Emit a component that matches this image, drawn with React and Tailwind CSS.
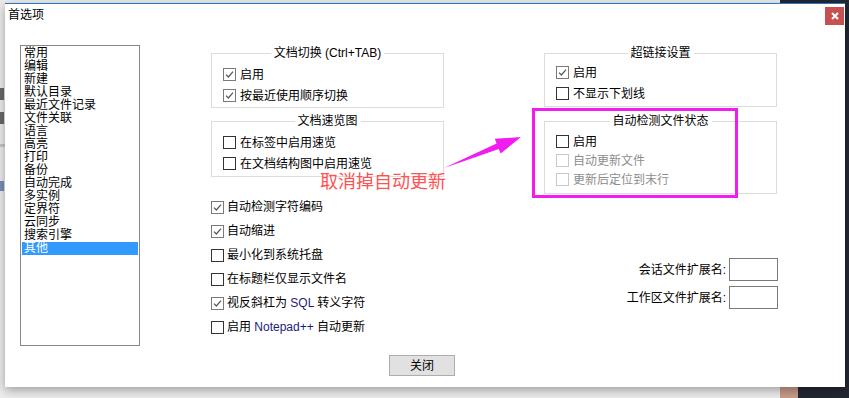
import React from "react";

const menuItems = [
    "常用", "编辑", "新建", "默认目录", "最近文件记录", "文件关联", "语言", "高亮",
    "打印", "备份", "自动完成", "多实例", "定界符", "云同步", "搜索引擎", "其他",
];

function Box({ checked, disabled }) {
    return (
        <span
            className={
                "w-[13px] h-[13px] border bg-white flex items-center justify-center shrink-0 " +
                (disabled ? "border-[#c8c8c8]" : checked ? "border-[#7a7a7a]" : "border-[#333333]")
            }
        >
            {checked && (
                <svg width="9" height="9" viewBox="0 0 9 9">
                    <path d="M1 4.6 L3.4 7 L8 1.6" stroke="#5a5a5a" strokeWidth="1.3" fill="none" />
                </svg>
            )}
        </span>
    );
}

function Check({ label, checked, disabled, gap = "gap-[4px]", h = "h-[21px]" }) {
    return (
        <div className={"flex items-center " + gap + " " + h}>
            <Box checked={checked} disabled={disabled} />
            <span className={disabled ? "text-[#8d8d8d]" : "text-black"}>{label}</span>
        </div>
    );
}

function Group({ title, className, children }) {
    return (
        <div className={"relative border border-[#dcdcdc] " + className}>
            <span className="absolute left-1/2 -translate-x-1/2 -top-[8px] bg-white px-[3px] leading-[14px] whitespace-nowrap">
                {title}
            </span>
            {children}
        </div>
    );
}

function App() {
    return (
        <div className="relative w-[849px] h-[398px] overflow-hidden bg-[#232833] text-[12px] leading-[14px] text-black font-['Liberation_Sans','Noto_Sans_CJK_SC',sans-serif]">
            {/* app behind the dialog */}
            <div className="absolute left-0 top-0 w-[780px] h-[398px] bg-[#ededed]">
                <div className="flex flex-col w-[5px] pt-[88px] gap-[12px]">
                    <div className="w-[4px] h-[12px] bg-[#6a6a6a]" />
                    <div className="w-[4px] h-[12px] bg-[#6a6a6a]" />
                    <div className="w-[5px] h-[3px] bg-[#c8c8c8] mt-[8px]" />
                    <div className="w-[4px] h-[10px] bg-[#7a8fb8] mt-[22px]" />
                </div>
            </div>
            <div className="absolute left-[780px] top-[384px] w-[18px] h-[14px] bg-[#c99c8a]" />

            {/* dialog window */}
            <div className="absolute left-[5px] top-[3px] w-[840px] h-[384px] bg-white border-t border-[#2a78c3] shadow-[0_3px_10px_rgba(0,0,0,0.35)] flex flex-col">
                <div className="h-[27px] flex items-start justify-between">
                    <span className="ml-[3px] mt-[4px]">首选项</span>
                    <div className="mt-[3px] mr-[1px] w-[19px] h-[18px] bg-[#c75050] flex items-center justify-center">
                        <svg width="8" height="8" viewBox="0 0 8 8">
                            <path d="M1 1 L7 7 M7 1 L1 7" stroke="white" strokeWidth="2" />
                        </svg>
                    </div>
                </div>

                <div className="flex pt-[14px] pl-[15px]">
                    {/* list */}
                    <div className="w-[120px] h-[301px] border border-[#828790] pt-[1px] px-[1px] shrink-0">
                        {menuItems.map((item, index) => (
                            <div
                                key={index}
                                className={
                                    "h-[13px] leading-[13px] pl-[2px] " +
                                    (item === "其他" ? "bg-[#3399ff] text-white" : "")
                                }
                            >
                                {item}
                            </div>
                        ))}
                    </div>

                    {/* middle column */}
                    <div className="ml-[71px] w-[233px] flex flex-col shrink-0">
                        <Group title="文档切换 (Ctrl+TAB)" className="mt-[8px] h-[55px] pt-[10px] pl-[11px]">
                            <Check label="启用" checked />
                            <Check label="按最近使用顺序切换" checked />
                        </Group>
                        <Group title="文档速览图" className="mt-[13px] h-[56px] pt-[10px] pl-[11px]">
                            <Check label="在标签中启用速览" />
                            <Check label="在文档结构图中启用速览" />
                        </Group>
                        <div className="mt-[18px] flex flex-col">
                            <Check label="自动检测字符编码" checked gap="gap-[3px]" h="h-[24px]" />
                            <Check label="自动缩进" checked gap="gap-[3px]" h="h-[24px]" />
                            <Check label="最小化到系统托盘" gap="gap-[3px]" h="h-[24px]" />
                            <Check label="在标题栏仅显示文件名" gap="gap-[3px]" h="h-[24px]" />
                            <Check
                                label={<>视反斜杠为 <span className="text-[#1c1c78]">SQL</span> 转义字符</>}
                                checked
                                gap="gap-[3px]"
                                h="h-[24px]"
                            />
                            <Check
                                label={<>启用 <span className="text-[#1c1c78]">Notepad++</span> 自动更新</>}
                                gap="gap-[3px]"
                                h="h-[24px]"
                            />
                        </div>
                    </div>

                    {/* right column */}
                    <div className="ml-[100px] w-[233px] flex flex-col shrink-0">
                        <Group title="超链接设置" className="mt-[8px] h-[54px] pt-[8px] pl-[11px]">
                            <Check label="启用" checked />
                            <Check label="不显示下划线" />
                        </Group>
                        <Group title="自动检测文件状态" className="mt-[14px] h-[73px] pt-[10px] pl-[11px]">
                            <Check label="启用" h="h-[19px]" />
                            <Check label="自动更新文件" disabled h="h-[19px]" />
                            <Check label="更新后定位到末行" disabled h="h-[19px]" />
                        </Group>
                        <div className="mt-[64px] flex flex-col gap-[5px] -mr-[1px]">
                            <div className="flex items-center justify-end gap-[3px]">
                                <span>会话文件扩展名:</span>
                                <div className="w-[49px] h-[23px] border border-[#7a7a7a]" />
                            </div>
                            <div className="flex items-center justify-end gap-[3px]">
                                <span>工作区文件扩展名:</span>
                                <div className="w-[49px] h-[23px] border border-[#7a7a7a]" />
                            </div>
                        </div>
                    </div>
                </div>

                <div className="mt-[9px] pl-[384px]">
                    <div className="w-[66px] h-[21px] bg-[#e1e1e1] border border-[#adadad] flex items-center justify-center">
                        关闭
                    </div>
                </div>
            </div>

            {/* annotation */}
            <div className="absolute left-[532px] top-[108px] w-[206px] h-[90px] border-[3px] border-[#f01cf0]" />
            <svg className="absolute left-0 top-0" width="849" height="398">
                <polygon
                    points="444,168 498.8,149 500.6,153.6 521,137 494.8,138.8 496.6,143.4"
                    fill="#f01cf0"
                />
            </svg>
            <span className="absolute left-[320px] top-[171px] text-[18px] leading-[22px] text-[#ff5353] whitespace-nowrap">
                取消掉自动更新
            </span>
        </div>
    );
}

export default App;
